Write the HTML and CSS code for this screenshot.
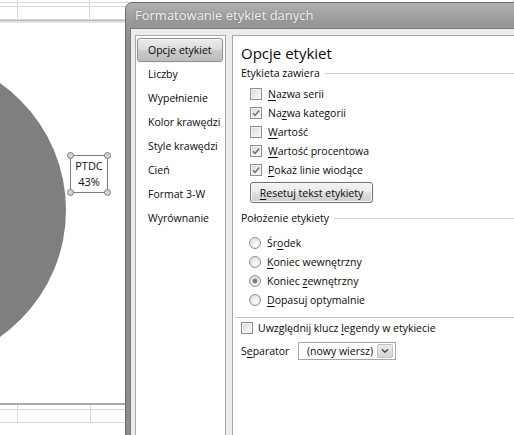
FILE: index.html
```html
<!DOCTYPE html>
<html lang="pl">
<head>
<meta charset="utf-8">
<link rel="stylesheet" href="styles.css">
<title>Formatowanie etykiet danych</title>
</head>
<body>
<div class="screen">
  <div class="sheet">
    <div class="sheet-top">
      <div class="cell"></div><div class="cell"></div><div class="cell"></div>
      <div class="cell"></div><div class="cell"></div><div class="cell"></div>
      <div class="cell"></div><div class="cell"></div><div class="cell"></div>
    </div>
    <div class="chart">
      <div class="pie"></div>
      <div class="data-label">
        <span>PTDC</span>
        <span>43%</span>
        <i class="handle h-tl"></i><i class="handle h-tr"></i>
        <i class="handle h-bl"></i><i class="handle h-br"></i>
      </div>
    </div>
    <div class="sheet-bottom">
      <div class="cell"></div><div class="cell"></div><div class="cell"></div>
      <div class="cell"></div><div class="cell"></div><div class="cell"></div>
    </div>
  </div>

  <div class="dialog">
    <div class="titlebar">Formatowanie etykiet danych</div>
    <div class="dlg-body">
      <ul class="nav">
        <li class="nav-item selected">Opcje etykiet</li>
        <li class="nav-item">Liczby</li>
        <li class="nav-item">Wypełnienie</li>
        <li class="nav-item">Kolor krawędzi</li>
        <li class="nav-item">Style krawędzi</li>
        <li class="nav-item">Cień</li>
        <li class="nav-item">Format 3-W</li>
        <li class="nav-item">Wyrównanie</li>
      </ul>
      <div class="pane">
        <div class="pane-title">Opcje etykiet</div>
        <div class="group-head">Etykieta zawiera</div>
        <div class="opt-list">
          <div class="opt"><span class="cb"></span><span><u>N</u>azwa serii</span></div>
          <div class="opt"><span class="cb checked"><svg viewBox="0 0 10 10"><path d="M2 5.2 L4.1 7.4 L8.2 2.6"/></svg></span><span>Na<u>z</u>wa kategorii</span></div>
          <div class="opt"><span class="cb"></span><span><u>W</u>artość</span></div>
          <div class="opt"><span class="cb checked"><svg viewBox="0 0 10 10"><path d="M2 5.2 L4.1 7.4 L8.2 2.6"/></svg></span><span><u>W</u>artość procentowa</span></div>
          <div class="opt"><span class="cb checked"><svg viewBox="0 0 10 10"><path d="M2 5.2 L4.1 7.4 L8.2 2.6"/></svg></span><span><u>P</u>okaż linie wiodące</span></div>
        </div>
        <div class="btn-row"><button class="btn"><u>R</u>esetuj tekst etykiety</button></div>
        <div class="group-head second">Położenie etykiety</div>
        <div class="opt-list radios">
          <div class="opt"><span class="rb"></span><span>Śr<u>o</u>dek</span></div>
          <div class="opt"><span class="rb"></span><span><u>K</u>oniec wewnętrzny</span></div>
          <div class="opt"><span class="rb on"></span><span>Koniec <u>z</u>ewnętrzny</span></div>
          <div class="opt"><span class="rb"></span><span><u>D</u>opasuj optymalnie</span></div>
        </div>
        <div class="divider"></div>
        <div class="opt flush"><span class="cb"></span><span>Uwzględnij klucz <u>l</u>egendy w etykiecie</span></div>
        <div class="sep-row">
          <span class="sep-label">S<u>e</u>parator</span>
          <div class="select">
            <span class="select-text">(nowy wiersz)</span>
            <span class="select-btn"><svg viewBox="0 0 9 6"><path d="M1 1 L4.5 4.5 L8 1"/></svg></span>
          </div>
        </div>
      </div>
    </div>
  </div>
</div>
</body>
</html>
```
FILE: styles.css
```css
* { box-sizing: border-box; }
html, body { margin: 0; padding: 0; }
body {
  width: 514px;
  height: 435px;
  overflow: hidden;
  background: #fff;
  font-family: "Open Sans", "Noto Sans", sans-serif;
  font-size: 10.5px;
  color: #0a0a0a;
}
.screen {
  position: relative;
  width: 514px;
  height: 435px;
  overflow: hidden;
}

/* spreadsheet background */
.sheet {
  display: flex;
  flex-direction: column;
  height: 435px;
}
.sheet-top {
  display: grid;
  grid-template-columns: 18px 72px 1fr;
  grid-template-rows: 3px 4px 13px;
  border-bottom: 1px solid #b8b8b8;
  box-shadow: 0 2px 0 #e2e2e2;
}
.sheet-top .cell,
.sheet-bottom .cell {
  border-right: 1px solid #d8d8d8;
  border-bottom: 1px solid #d8d8d8;
}
.chart {
  position: relative;
  flex: 1;
  margin-top: 2px;
}
.pie {
  position: absolute;
  left: -244px;
  top: 32px;
  width: 310px;
  height: 310px;
  border-radius: 50%;
  background: #7f7f7f;
}
.data-label {
  position: absolute;
  left: 70px;
  top: 132px;
  width: 38px;
  height: 38px;
  border: 1px solid #7a7a7a;
  display: flex;
  flex-direction: column;
  align-items: center;
  justify-content: center;
  font-size: 11px;
  line-height: 16px;
  color: #111;
}
.handle {
  position: absolute;
  width: 7px;
  height: 7px;
  border-radius: 50%;
  border: 1px solid #7c7c7c;
  background: #d4d4d4;
}
.h-tl { left: -4px; top: -4px; }
.h-tr { right: -4px; top: -4px; }
.h-bl { left: -4px; bottom: -4px; }
.h-br { right: -4px; bottom: -4px; }
.sheet-bottom {
  display: grid;
  grid-template-columns: 18px 73px 1fr;
  grid-template-rows: 5px 13px 12px;
  border-top: 2px solid #ababab;
}

/* dialog window */
.dialog {
  position: absolute;
  left: 125px;
  top: 2px;
  width: 400px;
  height: 445px;
  border: 1px solid #6c6c6c;
  border-radius: 7px 7px 0 0;
  background: linear-gradient(#b0b0b0, #a2a2a2 12px, #979797 20px, #8e8e8e 40px, #8c8c8c);
  padding-left: 4px;
  display: flex;
  flex-direction: column;
}
.titlebar {
  height: 25px;
  line-height: 25px;
  padding-left: 5px;
  font-size: 13px;
  color: #f3f3f3;
  text-shadow: 0 0 2px rgba(90,90,90,0.6);
  white-space: nowrap;
}
.dlg-body {
  flex: 1;
  display: flex;
  gap: 6px;
  padding: 6px 0 0 4px;
  background: #ececec;
  border-left: 1px solid #7a7a7a;
  border-top: 1px solid #7a7a7a;
}
.nav {
  list-style: none;
  margin: 0;
  padding: 2px 2px 0 1px;
  width: 91px;
  background: #fff;
  border: 1px solid #a9a9a9;
}
.nav-item {
  height: 24px;
  line-height: 24px;
  padding-left: 11px;
  white-space: nowrap;
}
.nav-item.selected {
  border: 1px solid #909090;
  border-radius: 3px;
  padding-left: 10px;
  line-height: 22px;
  background: linear-gradient(#ececec, #dcdcdc 45%, #c8c8c8 55%, #bdbdbd);
  box-shadow: inset 0 1px 0 #f6f6f6, 0 0 1px #bbb;
}
.pane {
  flex: 1;
  background: #fff;
  border: 1px solid #a9a9a9;
  padding: 7px 0 0 8px;
  display: flex;
  flex-direction: column;
}
.pane-title {
  height: 21px;
  line-height: 20px;
  font-size: 15px;
  white-space: nowrap;
}
.group-head {
  height: 18px;
  display: flex;
  align-items: center;
  white-space: nowrap;
}
.group-head::after {
  content: "";
  flex: 1;
  margin-left: 5px;
  border-top: 1px solid #cfcfcf;
}
.group-head.second { margin-top: 6px; }
.opt-list {
  margin-top: 2px;
  display: flex;
  flex-direction: column;
  padding-left: 9px;
}
.opt-list.radios { margin-top: 6px; padding-left: 8px; }
.opt {
  height: 19px;
  display: flex;
  align-items: center;
  gap: 6px;
  white-space: nowrap;
}
.opt.flush { gap: 5px; }
u { text-decoration: underline; text-decoration-thickness: 1px; text-underline-offset: 1.5px; }
.cb {
  width: 12px;
  height: 12px;
  flex: none;
  border: 1px solid #8f8f8f;
  background: linear-gradient(135deg, #d6d6d6, #f2f2f2 70%, #fbfbfb);
  box-shadow: inset 0 0 0 1px #f4f4f4;
  display: flex;
  align-items: center;
  justify-content: center;
}
.cb svg { width: 10px; height: 10px; }
.cb path { fill: none; stroke: #6e6e6e; stroke-width: 1.5; }
.rb {
  width: 12px;
  height: 12px;
  flex: none;
  border-radius: 50%;
  border: 1px solid #8f8f8f;
  background: radial-gradient(circle at 60% 65%, #fdfdfd, #e6e6e6 60%, #d2d2d2);
  display: flex;
  align-items: center;
  justify-content: center;
}
.rb.on::before {
  content: "";
  width: 4px;
  height: 4px;
  border-radius: 50%;
  background: #7a7a7a;
  box-shadow: 0 0 1px 1px #bdbdbd;
}
.btn-row {
  margin-top: 3px;
  padding-left: 9px;
  display: flex;
}
.btn {
  width: 123px;
  height: 21px;
  padding: 0;
  border: 1px solid #707070;
  border-radius: 3px;
  font: inherit;
  color: #0a0a0a;
  background: linear-gradient(#f3f3f3, #ebebeb 48%, #dddddd 52%, #cfcfcf);
  box-shadow: inset 0 0 0 1px #f8f8f8;
}
.divider {
  margin: 8px 0 0 -6px;
  border-top: 1px solid #c6c6c6;
}
.sep-row {
  margin-top: 3px;
  height: 21px;
  display: flex;
  align-items: center;
}
.sep-label {
  width: 57px;
  flex: none;
}
.select {
  width: 98px;
  height: 18px;
  border: 1px solid #a6a6a6;
  display: flex;
  align-items: center;
  padding: 1px;
}
.select-text {
  flex: 1;
  padding-left: 7px;
  white-space: nowrap;
}
.select-btn {
  width: 16px;
  height: 14px;
  margin-right: 1px;
  border: 1px solid #c2c2c2;
  border-radius: 2px;
  background: linear-gradient(#ececec, #d6d6d6);
  display: flex;
  align-items: center;
  justify-content: center;
}
.select-btn svg { width: 8px; height: 6px; }
.select-btn path { fill: none; stroke: #4a4a4a; stroke-width: 1.6; }
```
